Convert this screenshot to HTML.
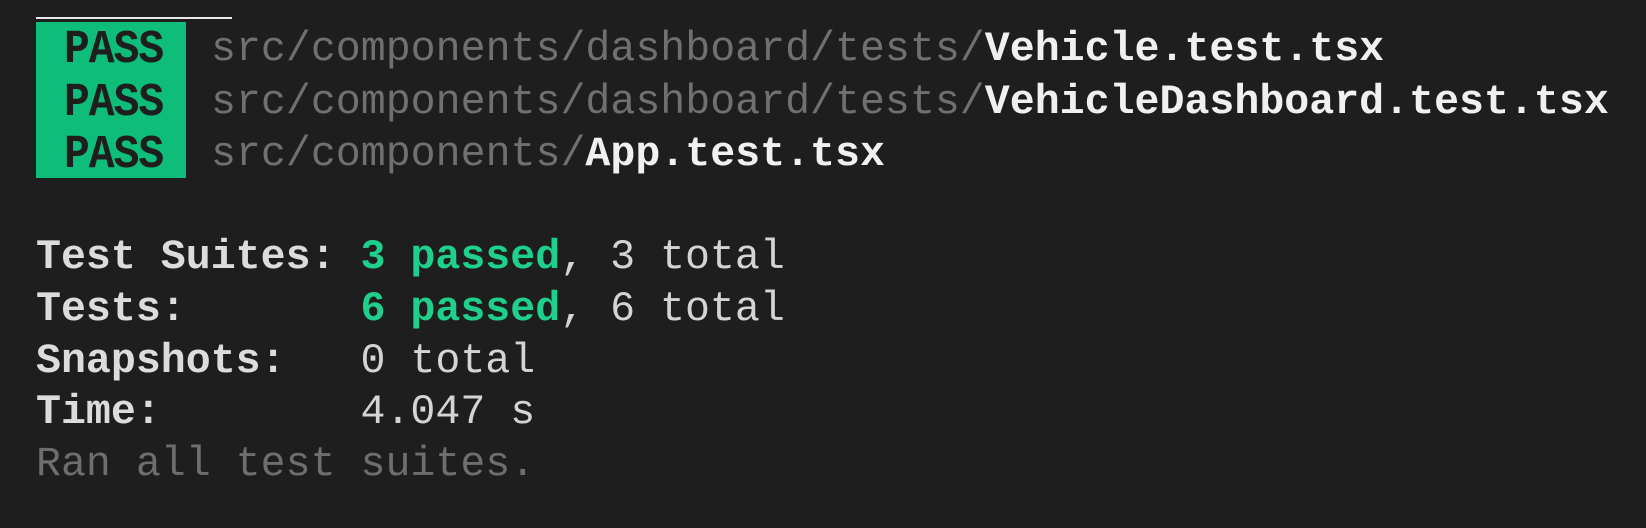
<!DOCTYPE html>
<html><head><meta charset="utf-8"><style>
html,body{margin:0;padding:0;background:#1e1e1e;width:1646px;height:528px;overflow:hidden}
body{font-family:"Liberation Mono","DejaVu Sans Mono",monospace;font-size:41.6px;color:#d4d4d4;position:relative}
.line{position:absolute;left:36px;height:52px;line-height:52px;white-space:pre}
.topbar{position:absolute;left:36px;top:17px;width:196px;height:2px;background:#e8e8e8}
.box{position:absolute;left:36px;top:22px;width:150px;height:156px;background:#0fbd7b}
.pass{position:absolute;left:64px;font-weight:bold;color:#1e1e1e;height:52px;line-height:52px;font-size:43px;letter-spacing:-1px;transform:scaleY(1.1)}
.g{color:#707070}
.w{color:#f0f0f0;font-weight:bold}
.b{font-weight:bold;color:#dcdcdc}
.gr{color:#1fd08c;font-weight:bold}
.dim{color:#6e6e6e}
</style></head><body>
<div class="topbar"></div>
<div class="box"></div>
<div class="pass" style="top:24px">PASS</div>
<div class="pass" style="top:77px">PASS</div>
<div class="pass" style="top:129px">PASS</div>
<div class="line" style="left:211px;top:24px"><span class="g">src/components/dashboard/tests/</span><span class="w">Vehicle.test.tsx</span></div>
<div class="line" style="left:211px;top:77px"><span class="g">src/components/dashboard/tests/</span><span class="w">VehicleDashboard.test.tsx</span></div>
<div class="line" style="left:211px;top:129px"><span class="g">src/components/</span><span class="w">App.test.tsx</span></div>
<div class="line" style="top:232px"><span class="b">Test Suites: </span><span class="gr">3 passed</span>, 3 total</div>
<div class="line" style="top:284px"><span class="b">Tests:       </span><span class="gr">6 passed</span>, 6 total</div>
<div class="line" style="top:336px"><span class="b">Snapshots:   </span>0 total</div>
<div class="line" style="top:387px"><span class="b">Time:        </span>4.047 s</div>
<div class="line dim" style="top:439px">Ran all test suites.</div>
</body></html>
